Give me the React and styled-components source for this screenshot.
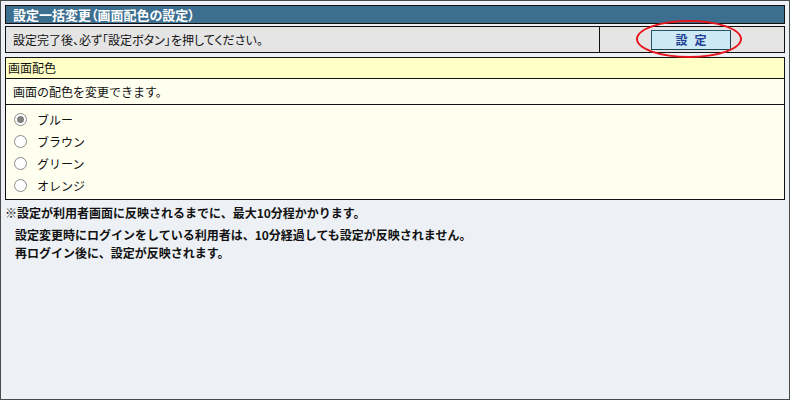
import React from "react"
import styled, { createGlobalStyle } from "styled-components"

const Global = createGlobalStyle`
  html, body { margin: 0; padding: 0; }
  body {
    font-family: "Noto Sans CJK JP", "Noto Sans", sans-serif;
    font-size: 12px;
    color: #111;
  }
`

const Frame = styled.div`
  box-sizing: border-box;
  width: 790px;
  height: 400px;
  border: 1px solid #4a4a4a;
  background: #edf1f5;
  padding: 4px 4px 0 4px;
  display: flex;
  flex-direction: column;
`

const TitleBar = styled.div`
  box-sizing: border-box;
  height: 19px;
  border: 1px solid #111;
  background: #3b6e8f;
  color: #fff;
  font-weight: bold;
  font-size: 13px;
  line-height: 17px;
  padding-left: 7px;
  font-feature-settings: "palt";
`

const ActionRow = styled.div`
  box-sizing: border-box;
  margin-top: 2px;
  height: 27px;
  border: 1px solid #111;
  background: #e5e5e5;
  display: grid;
  grid-template-columns: 594px 1fr;
`

const Message = styled.div`
  display: flex;
  align-items: center;
  padding-left: 7px;
  border-right: 1px solid #111;
  font-feature-settings: "palt";
`

const ButtonCell = styled.div`
  position: relative;
  display: flex;
  align-items: center;
  justify-content: center;
`

const SetButton = styled.button`
  box-sizing: border-box;
  width: 80px;
  height: 20px;
  margin-right: 2px;
  border: 1px solid #24566b;
  border-right-color: #1b4152;
  border-bottom-color: #1b4152;
  background: #cde9f3;
  color: #1e3f96;
  font-family: inherit;
  font-weight: bold;
  font-size: 12px;
  letter-spacing: 7px;
  padding: 0 0 0 7px;
  line-height: 18px;
`

const Highlight = styled.span`
  position: absolute;
  left: 36px;
  top: -7px;
  width: 106px;
  height: 38px;
  box-sizing: border-box;
  border: 2px solid #e8141c;
  border-radius: 50%;
  pointer-events: none;
`

const Panel = styled.div`
  box-sizing: border-box;
  margin-top: 4px;
  border: 1px solid #111;
  background: #fffff0;
`

const PanelHead = styled.div`
  height: 20px;
  line-height: 20px;
  background: #ffffc6;
  padding-left: 2px;
  border-bottom: 1px solid #111;
`

const PanelNote = styled.div`
  height: 25px;
  line-height: 25px;
  padding-left: 7px;
  border-bottom: 1px solid #111;
`

const Options = styled.div`
  display: flex;
  flex-direction: column;
  padding: 3px 0 3px 8px;
`

const Option = styled.label`
  display: flex;
  align-items: center;
  height: 22px;
  gap: 10px;
`

const Radio = styled.span`
  box-sizing: border-box;
  width: 13px;
  height: 13px;
  border-radius: 50%;
  border: 1px solid #8a8a8a;
  background: #fff;
  display: flex;
  align-items: center;
  justify-content: center;
  &::after {
    content: "";
    width: 7px;
    height: 7px;
    border-radius: 50%;
    background: ${p => (p.$checked ? "#808080" : "transparent")};
  }
`

const Notes = styled.div`
  padding-top: 4px;
  font-weight: bold;
  font-size: 12px;
  line-height: 18px;
`

const NoteLine = styled.div`
  padding-left: ${p => (p.$indent ? "10px" : "0")};
  margin-bottom: ${p => (p.$lead ? "4px" : "0")};
`

const colors = ["ブルー", "ブラウン", "グリーン", "オレンジ"]

export default function App() {
  return (
    <>
      <Global />
      <Frame>
        <TitleBar>設定一括変更（画面配色の設定）</TitleBar>
        <ActionRow>
          <Message>設定完了後、必ず「設定ボタン」を押してください。</Message>
          <ButtonCell>
            <SetButton>設定</SetButton>
            <Highlight />
          </ButtonCell>
        </ActionRow>
        <Panel>
          <PanelHead>画面配色</PanelHead>
          <PanelNote>画面の配色を変更できます。</PanelNote>
          <Options>
            {colors.map((c, i) => (
              <Option key={c}>
                <Radio $checked={i === 0} />
                {c}
              </Option>
            ))}
          </Options>
        </Panel>
        <Notes>
          <NoteLine $lead>※設定が利用者画面に反映されるまでに、最大10分程かかります。</NoteLine>
          <NoteLine $indent>設定変更時にログインをしている利用者は、10分経過しても設定が反映されません。</NoteLine>
          <NoteLine $indent>再ログイン後に、設定が反映されます。</NoteLine>
        </Notes>
      </Frame>
    </>
  )
}
